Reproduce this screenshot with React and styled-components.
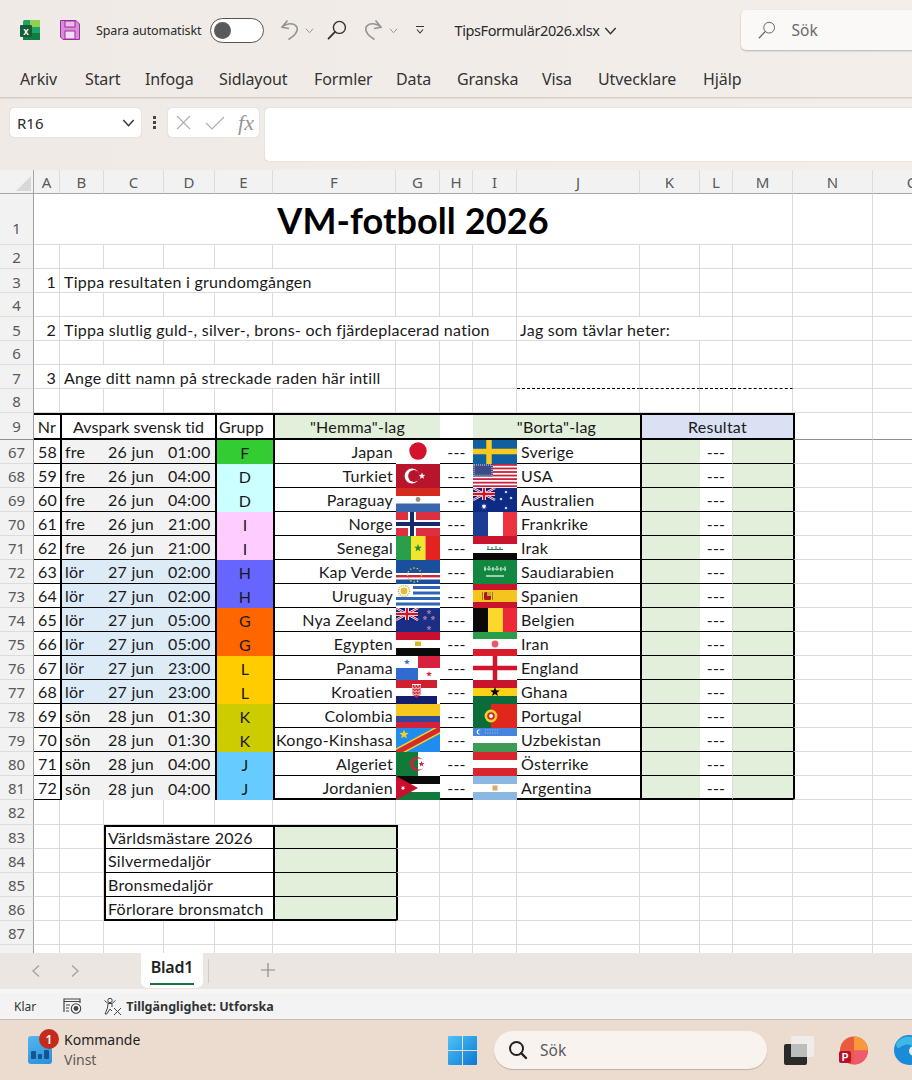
import React from "react";
import styled, { createGlobalStyle } from "styled-components";

const GRID = "#dbdbdb";
const GREEN = "#e2efda";
const UI = '"Noto Sans", "Open Sans", sans-serif';
const SHEET = 'Lato, "Open Sans", sans-serif';
const COLS = "34px 26px 44px 60px 51px 58px 123px 44px 33px 44px 123px 60px 33px 60px 80px 80px";

const Global = createGlobalStyle`
	html, body { margin: 0; padding: 0; overflow: hidden; background: #f0ebe6; }
`;
const Page = styled.div`
	width: 912px;
	height: 1080px;
	display: flex;
	flex-direction: column;
	overflow: hidden;
	font-family: ${UI};
	color: #2b2b2b;
`;
const Top = styled.div`
	background: linear-gradient(90deg, #efeae5, #f3eeea);
	flex-shrink: 0;
`;
const TitleBar = styled.div`
	height: 60px;
	display: flex;
	align-items: center;
	padding-left: 20px;
	white-space: nowrap;
`;
const Slot = styled.div`
	margin-left: ${p => p.$ml || 0}px;
	display: flex;
	align-items: center;
	flex-shrink: 0;
`;
const AutoSave = styled.span`
	font-size: 12.5px;
	letter-spacing: -0.1px;
`;
const Toggle = styled.div`
	width: 54px;
	height: 25px;
	box-sizing: border-box;
	border: 1.5px solid #555;
	border-radius: 13px;
	background: #fff;
	display: flex;
	align-items: center;
	padding-left: 3px;
	&::before {
		content: '';
		width: 17px;
		height: 17px;
		border-radius: 50%;
		background: #5a5a5a;
	}
`;
const FileName = styled.span`
	font-size: 14.5px;
	letter-spacing: -0.4px;
`;
const SearchBox = styled.div`
	width: 220px;
	height: 40px;
	box-sizing: border-box;
	background: #fbf9f8;
	border-radius: 5px;
	box-shadow: 0 1px 2px rgba(0, 0, 0, 0.25);
	display: flex;
	align-items: center;
	padding-left: 17px;
	gap: 16px;
	font-size: 15.5px;
	color: #6a6a6a;
`;
const TabBar = styled.div`
	height: 38px;
	display: flex;
	align-items: center;
	padding: 0 0 0 20px;
	box-sizing: border-box;
	border-bottom: 1px solid #d2cdc8;
	box-shadow: 0 1px 1px rgba(0, 0, 0, 0.06);
`;
const RibbonTab = styled.div`
	width: ${p => p.$w}px;
	flex-shrink: 0;
	font-size: 16px;
	letter-spacing: -0.1px;
	color: #333;
`;
const FormulaBar = styled.div`
	height: 72px;
	box-sizing: border-box;
	padding: 10px 0 0 10px;
	display: flex;
	align-items: flex-start;
`;
const NameBox = styled.div`
	width: 131px;
	height: 29px;
	box-sizing: border-box;
	background: #fff;
	border-radius: 4px;
	box-shadow: 0 0 1px rgba(0, 0, 0, 0.3);
	display: flex;
	align-items: center;
	justify-content: space-between;
	padding: 0 6px 0 7px;
	font-size: 15px;
`;
const Dots = styled.div`
	width: 27px;
	height: 29px;
	display: flex;
	flex-direction: column;
	align-items: center;
	justify-content: center;
	gap: 2px;
	span {
		width: 3px;
		height: 3px;
		background: #444;
	}
`;
const FxBox = styled.div`
	width: 91px;
	height: 29px;
	box-sizing: border-box;
	background: #fff;
	border-radius: 4px;
	box-shadow: 0 0 1px rgba(0, 0, 0, 0.3);
	display: flex;
	align-items: center;
	justify-content: space-between;
	padding: 0 5px 0 7px;
	margin-right: 6px;
`;
const Fx = styled.span`
	font-family: "Liberation Serif", serif;
	font-style: italic;
	font-size: 22px;
	color: #969696;
`;
const FormulaInput = styled.div`
	flex: 1;
	height: 53px;
	background: #fff;
	border-radius: 4px 0 0 4px;
	box-shadow: 0 0 1px rgba(0, 0, 0, 0.35);
`;

const Sheet = styled.div`
	height: 783px;
	flex-shrink: 0;
	overflow: hidden;
	background: #fff;
`;
const Row = styled.div`
	display: grid;
	grid-template-columns: ${COLS};
	height: ${p => p.$h || 24}px;
	width: 1014px;
`;
const Head = styled.div`
	background: #f2f2f2;
	color: #595959;
	font-family: ${UI};
	font-size: 15px;
	display: flex;
	align-items: center;
	justify-content: center;
	box-sizing: border-box;
	border-right: 1px solid ${p => (p.$corner ? "#a6a6a6" : "#dcdcdc")};
	border-bottom: ${p => p.$bb || "1px solid #a6a6a6"};
`;
const RowHead = styled(Head)`
	border-right: 1px solid #a0a0a0;
	border-bottom: ${p => p.$bb || "1px solid #dcdcdc"};
	padding-top: ${p => p.$pt || 0}px;
`;
const Corner = styled(Head)`
	justify-content: flex-end;
	align-items: flex-end;
	padding: 0 2px 2px 0;
`;
const Cell = styled.div`
	grid-column: span ${p => p.$span || 1};
	box-sizing: border-box;
	display: flex;
	align-items: center;
	justify-content: ${p => p.$align || "flex-start"};
	min-width: 0;
	white-space: nowrap;
	padding: ${p => p.$pad || "0"};
	background: ${p => p.$bg || "#fff"};
	color: #1a1a1a;
	font-family: ${SHEET};
	font-size: 16px;
	letter-spacing: ${p => p.$ls || "0.26px"};
	border-right: ${p => p.$br || `1px solid ${GRID}`};
	border-bottom: ${p => p.$bb || `1px solid ${GRID}`};
	border-left: ${p => (p.$tl ? "2px solid #000" : "none")};
	border-top: ${p => (p.$tt ? "2px solid #000" : "none")};
`;
const Title = styled(Cell)`
	font-size: 36px;
	font-weight: 700;
	color: #000;
	letter-spacing: 0.1px;
`;
const FlagCell = styled.div`
	height: 24px;
	background: #fff;
	overflow: hidden;
`;
const FlagSvg = styled.svg`
	display: block;
	width: 44px;
	height: 24px;
`;

const SheetTabs = styled.div`
	height: 40px;
	flex-shrink: 0;
	background: #ebe6e1;
	display: flex;
	align-items: flex-start;
	box-sizing: border-box;
	border-bottom: 4px solid #f7f6f5;
`;
const Nav = styled.div`
	width: 141px;
	height: 36px;
	flex-shrink: 0;
	display: flex;
	align-items: center;
	gap: 29px;
	padding-left: 31px;
	box-sizing: border-box;
`;
const ActiveTab = styled.div`
	width: 62px;
	height: 35px;
	flex-shrink: 0;
	box-sizing: border-box;
	background: #fff;
	border-radius: 0 0 7px 7px;
	display: flex;
	justify-content: center;
	font-size: 16px;
	font-weight: 600;
	letter-spacing: -0.2px;
	color: #222;
	padding-top: 3px;
`;
const TabLabel = styled.span`
	height: 27px;
	padding: 0 0.5px;
	border-bottom: 2px solid #1e6e42;
`;
const TabSep = styled.div`
	width: 1px;
	height: 24px;
	margin: 6px 0 0 5px;
	background: #cfcac5;
`;
const Plus = styled.div`
	margin: 9px 0 0 51px;
	display: flex;
`;
const StatusBar = styled.div`
	height: 27px;
	flex-shrink: 0;
	background: #f3f3f3;
	display: flex;
	align-items: center;
	padding-left: 14px;
	font-size: 12px;
	color: #333;
	border-bottom: 1px solid #c9bcb2;
	box-sizing: border-box;
`;
const StatusBold = styled.span`
	font-weight: 700;
	font-size: 12.5px;
	margin-left: 4px;
	color: #333;
`;
const Taskbar = styled.div`
	height: 60px;
	flex-shrink: 0;
	background: #ecdccf;
	display: flex;
	align-items: center;
	white-space: nowrap;
`;
const Widget = styled.div`
	width: 24px;
	height: 28px;
	margin-left: 28px;
	position: relative;
	flex-shrink: 0;
	background: linear-gradient(160deg, #52b6f2, #2c8fdc);
	border-radius: 3px;
	display: flex;
	align-items: flex-end;
	gap: 2px;
	padding: 0 3px 5px;
	box-sizing: border-box;
`;
const Bar = styled.span`
	flex: 1;
	height: ${p => p.$h}px;
	background: #12568f;
	border-radius: 1px;
`;
const Badge = styled.div`
	position: absolute;
	top: -7px;
	right: -7px;
	width: 20px;
	height: 20px;
	border-radius: 50%;
	background: #c42b1c;
	color: #fff;
	font-size: 12px;
	font-weight: 600;
	display: flex;
	align-items: center;
	justify-content: center;
`;
const WidgetText = styled.div`
	margin-left: 12px;
	width: 384px;
	flex-shrink: 0;
	font-size: 14px;
	line-height: 20px;
	color: #1f1f1f;
	span {
		display: block;
		color: #5f5a56;
	}
`;
const TaskSearch = styled.div`
	width: 273px;
	height: 38px;
	margin-left: 17px;
	flex-shrink: 0;
	box-sizing: border-box;
	border-radius: 19px;
	background: #f9f3ef;
	box-shadow: 0 1px 1px rgba(0, 0, 0, 0.2);
	display: flex;
	align-items: center;
	gap: 12px;
	padding-left: 14px;
	font-size: 15.5px;
	color: #5a5a5a;
`;

const star = (cx, cy, r, n = 5) => {
	const pts = [];
	for (let i = 0; i < n * 2; i++) {
		const rr = i % 2 ? r * 0.42 : r;
		const a = -Math.PI / 2 + (i * Math.PI) / n;
		pts.push(`${(cx + rr * Math.cos(a)).toFixed(2)},${(cy + rr * Math.sin(a)).toFixed(2)}`);
	}
	return pts.join(" ");
};

const Jack = () => (
	<g>
		<rect width="22" height="12" fill="#00247d" />
		<path d="M0 0L22 12M22 0L0 12" stroke="#fff" strokeWidth="2.4" />
		<path d="M0 0L22 12M22 0L0 12" stroke="#cf142b" strokeWidth="0.9" />
		<path d="M11 0V12M0 6H22" stroke="#fff" strokeWidth="4" />
		<path d="M11 0V12M0 6H22" stroke="#cf142b" strokeWidth="2.4" />
	</g>
);
const Bars = ({ a, b, c, y1 = 8, y2 = 16 }) => (
	<g>
		<rect width="44" height={y1} fill={a} />
		<rect y={y1} width="44" height={y2 - y1} fill={b} />
		<rect y={y2} width="44" height={24 - y2} fill={c} />
	</g>
);
const Flag = ({ children }) => (
	<FlagCell>
		<FlagSvg viewBox="0 0 44 24">{children}</FlagSvg>
	</FlagCell>
);

const flags = {
	Japan: <circle cx="22" cy="11" r="8.7" fill="#d3122c" />,
	Turkiet: (
		<g>
			<rect width="44" height="24" fill="#b8152c" />
			<circle cx="16" cy="12" r="7.4" fill="#fff" />
			<circle cx="18" cy="12" r="5.9" fill="#b8152c" />
			<polygon points={star(26, 12, 3.4)} fill="#fff" />
		</g>
	),
	Paraguay: (
		<g>
			<Bars a="#d52b1e" b="#fff" c="#3a66ad" y1={8} y2={15.5} />
			<circle cx="22" cy="11.5" r="2.4" fill="#a08a78" />
		</g>
	),
	Norge: (
		<g>
			<rect width="44" height="24" fill="#dc3040" />
			<path d="M16 0V24M0 12H44" stroke="#fff" strokeWidth="8" />
			<path d="M16 0V24M0 12H44" stroke="#15296b" strokeWidth="4" />
		</g>
	),
	Senegal: (
		<g>
			<rect width="15" height="24" fill="#2b9e4c" />
			<rect x="15" width="14.5" height="24" fill="#f2e52d" />
			<rect x="29.5" width="14.5" height="24" fill="#e3231f" />
			<polygon points={star(22, 12, 4)} fill="#1d8a3c" />
		</g>
	),
	"Kap Verde": (
		<g>
			<rect width="44" height="24" fill="#1a4f9e" />
			<rect y="13" width="44" height="6.5" fill="#fff" />
			<rect y="15" width="44" height="2.4" fill="#d2233a" />
			<circle cx="18.5" cy="15" r="7" fill="none" stroke="#e6c53a" strokeWidth="1.3" strokeDasharray="1.5 2" />
		</g>
	),
	Uruguay: (
		<g>
			<rect width="44" height="24" fill="#fff" />
			<path d="M17 3.5H44M17 9H44M0 14.5H44M0 20H44" stroke="#2f63b8" strokeWidth="2.8" />
			<circle cx="8" cy="7" r="3.4" fill="#e8b93a" />
			<circle cx="8" cy="7" r="5.5" fill="none" stroke="#d6a72a" strokeWidth="1.4" strokeDasharray="1 1" />
		</g>
	),
	"Nya Zeeland": (
		<g>
			<rect width="44" height="24" fill="#1b2e86" />
			<Jack />
			{[[33, 4], [37, 10], [29, 10], [33, 20]].map(([x, y]) => (
				<polygon key={x + "-" + y} points={star(x, y, 2)} fill="#c2374f" stroke="#fff" strokeWidth="0.3" />
			))}
		</g>
	),
	Egypten: (
		<g>
			<Bars a="#c8102e" b="#fff" c="#0a0a0a" />
			<rect x="19" y="9.5" width="6" height="4.5" fill="#e6b422" />
		</g>
	),
	Panama: (
		<g>
			<rect width="44" height="24" fill="#fff" />
			<rect x="22" width="22" height="12" fill="#d8213f" />
			<rect y="12" width="22" height="12" fill="#2f6bd0" />
			<polygon points={star(11, 6, 3)} fill="#2f6bd0" />
			<polygon points={star(33, 18, 3)} fill="#d8213f" />
		</g>
	),
	Kroatien: (
		<g>
			<rect width="41" height="8" fill="#cf2030" />
			<rect y="8" width="41" height="8" fill="#fff" />
			<rect y="16" width="41" height="8" fill="#131e6e" />
			<rect x="16" y="4" width="9" height="12" fill="#fff" />
			<path d="M16.5 5H24.5V14.5L20.5 18L16.5 14.5Z" fill="#d5233a" />
			<path d="M19 5V16M22 5V16M16.5 8H24.5M16.5 11H24.5M16.5 14H24.5" stroke="#fff" strokeWidth="1" strokeDasharray="1.5 1.5" />
		</g>
	),
	Colombia: <Bars a="#f6c81d" b="#2d4a9c" c="#d3233c" y1={12} y2={18} />,
	"Kongo-Kinshasa": (
		<g>
			<rect width="44" height="24" fill="#1f8cf0" />
			<path d="M-2 26L46 0" stroke="#f5d01e" strokeWidth="8" />
			<path d="M-2 26L46 0" stroke="#d32a2f" strokeWidth="5" />
			<polygon points={star(8, 6.5, 5)} fill="#f5d01e" />
		</g>
	),
	Algeriet: (
		<g>
			<rect width="44" height="24" fill="#fff" />
			<rect width="22" height="24" fill="#0f7a3a" />
			<circle cx="21" cy="12" r="7" fill="#d2203a" />
			<path d="M22 6.49A5.6 5.6 0 1 1 22 17.51Z" fill="#fff" />
			<path d="M22 6.49A5.6 5.6 0 0 0 22 17.51Z" fill="#0f7a3a" />
			<polygon points={star(25.5, 12, 3)} fill="#d2203a" />
		</g>
	),
	Jordanien: (
		<g>
			<Bars a="#0a0a0a" b="#fff" c="#11793c" />
			<polygon points="0,0 22,12 0,24" fill="#c8102e" />
			<polygon points={star(7, 12, 2.4, 7)} fill="#fff" />
		</g>
	),
	Sverige: (
		<g>
			<rect width="44" height="24" fill="#10609f" />
			<path d="M16 0V24M0 11.5H44" stroke="#fcc91c" strokeWidth="5.5" />
		</g>
	),
	USA: (
		<g>
			<rect width="44" height="24" fill="#fff" />
			{[0, 1, 2, 3, 4, 5, 6].map(i => (
				<rect key={i} y={i * 3.55} width="44" height="1.8" fill="#c9223f" />
			))}
			<rect width="20" height="12.4" fill="#3c4a86" />
			<rect x="1" y="1" width="18" height="10.4" fill="none" stroke="#8f98bb" strokeWidth="2" strokeDasharray="1 1" />
		</g>
	),
	Australien: (
		<g>
			<rect width="44" height="24" fill="#0d2a84" />
			<Jack />
			<polygon points={star(11, 18.5, 3.2, 7)} fill="#fff" />
			{[[33, 4], [38, 10], [28, 11], [33, 20]].map(([x, y]) => (
				<polygon key={x + "-" + y} points={star(x, y, 1.7, 7)} fill="#fff" />
			))}
		</g>
	),
	Frankrike: (
		<g>
			<rect width="15" height="24" fill="#1c3b94" />
			<rect x="15" width="15" height="24" fill="#fff" />
			<rect x="30" width="14" height="24" fill="#ee3340" />
		</g>
	),
	Irak: (
		<g>
			<Bars a="#c8142c" b="#fff" c="#0a0a0a" y1={8} y2={17} />
			<path d="M14 13.5H30M15 13V10M19 13V11M23 13V10M27 13V11" stroke="#1f7a3c" strokeWidth="1" />
		</g>
	),
	Saudiarabien: (
		<g>
			<rect width="44" height="24" fill="#11873f" />
			<path d="M11 9H33M12 6.5V11M16 6V11M20 7V11M24 6V11M28 7V11M32 6.5V11" stroke="#e9f5ec" strokeWidth="1.1" strokeDasharray="2 0.6" />
			<path d="M13 16H31" stroke="#fff" strokeWidth="1.2" />
		</g>
	),
	Spanien: (
		<g>
			<Bars a="#c8142c" b="#f6c51d" c="#c8142c" y1={6} y2={18} />
			<rect x="11" y="8" width="7" height="8" rx="1.5" fill="#ad1519" />
			<rect x="14" y="8" width="4" height="4" fill="#caa52d" />
			<path d="M9.5 8V16M19.5 8V16" stroke="#8a7a50" strokeWidth="1" />
		</g>
	),
	Belgien: (
		<g>
			<rect width="15" height="24" fill="#0a0a0a" />
			<rect x="15" width="15" height="24" fill="#fdd72a" />
			<rect x="30" width="14" height="24" fill="#ed2939" />
		</g>
	),
	Iran: (
		<g>
			<Bars a="#2a9d4a" b="#fff" c="#da1b2c" y1={7} y2={17} />
			<circle cx="22" cy="12" r="3.4" fill="#e5596a" />
		</g>
	),
	England: (
		<g>
			<rect width="44" height="24" fill="#fff" />
			<path d="M22 0V24M0 12H44" stroke="#cf142b" strokeWidth="4.5" />
		</g>
	),
	Ghana: (
		<g>
			<Bars a="#c8142c" b="#fcd116" c="#0c6b3d" />
			<polygon points={star(22, 12, 5)} fill="#000" />
		</g>
	),
	Portugal: (
		<g>
			<rect width="44" height="24" fill="#e0271e" />
			<rect width="18" height="24" fill="#0b6e3a" />
			<circle cx="18" cy="12" r="6.4" fill="#f2d030" />
			<circle cx="18" cy="12" r="3.8" fill="#d1281f" />
			<circle cx="18" cy="12" r="1.9" fill="#fff" />
		</g>
	),
	Uzbekistan: (
		<g>
			<Bars a="#4585e0" b="#fff" c="#3e9a55" y1={8} y2={15} />
			<circle cx="6" cy="4" r="2.4" fill="#fff" />
			<circle cx="7" cy="4" r="2" fill="#4585e0" />
			<path d="M12 2H26M12 5H26" stroke="#a8c7f0" strokeWidth="1" strokeDasharray="1 1.4" />
		</g>
	),
	"Österrike": <Bars a="#d9252e" b="#fff" c="#d9252e" />,
	Argentina: (
		<g>
			<Bars a="#8ab8e2" b="#fff" c="#8ab8e2" />
			<rect x="19.5" y="9.5" width="5" height="5" fill="#e0a860" />
		</g>
	),
};

const matches = [
	[67, 58, "fre", "26 jun", "01:00", "F", "Japan", "Sverige"],
	[68, 59, "fre", "26 jun", "04:00", "D", "Turkiet", "USA"],
	[69, 60, "fre", "26 jun", "04:00", "D", "Paraguay", "Australien"],
	[70, 61, "fre", "26 jun", "21:00", "I", "Norge", "Frankrike"],
	[71, 62, "fre", "26 jun", "21:00", "I", "Senegal", "Irak"],
	[72, 63, "lör", "27 jun", "02:00", "H", "Kap Verde", "Saudiarabien"],
	[73, 64, "lör", "27 jun", "02:00", "H", "Uruguay", "Spanien"],
	[74, 65, "lör", "27 jun", "05:00", "G", "Nya Zeeland", "Belgien"],
	[75, 66, "lör", "27 jun", "05:00", "G", "Egypten", "Iran"],
	[76, 67, "lör", "27 jun", "23:00", "L", "Panama", "England"],
	[77, 68, "lör", "27 jun", "23:00", "L", "Kroatien", "Ghana"],
	[78, 69, "sön", "28 jun", "01:30", "K", "Colombia", "Portugal"],
	[79, 70, "sön", "28 jun", "01:30", "K", "Kongo-Kinshasa", "Uzbekistan"],
	[80, 71, "sön", "28 jun", "04:00", "J", "Algeriet", "Österrike"],
	[81, 72, "sön", "28 jun", "04:00", "J", "Jordanien", "Argentina"],
];
const groupColors = {
	F: "#33cc33", D: "#ccffff", I: "#ffccff", H: "#6666ff",
	G: "#ff6600", L: "#ffcc00", K: "#cccc00", J: "#66ccff",
};
const columnLetters = "ABCDEFGHIJKLMNOP".split("");
const medals = ["Världsmästare 2026", "Silvermedaljör", "Bronsmedaljör", "Förlorare bronsmatch"];

const Blank = ({ n }) => Array.from({ length: n }, (_, i) => <Cell key={"b" + i} />);

const MatchRow = ({ m }) => {
	const [row, nr, day, date, time, group, home, away] = m;
	const line = "1px solid #000";
	const last = row === 81;
	const thick = "2px solid #000";
	const fill = day === "lör" ? "#ddebf7" : "#f2f2f2";
	const bottom = last ? thick : line;
	const dateBottom = last ? "none" : line;
	return (
		<Row>
			<RowHead>{row}</RowHead>
			<Cell $align="flex-end" $pad="0 3px 0 0" $bb={line} $br="none">{nr}</Cell>
			<Cell $tl $bg={fill} $br="none" $bb={dateBottom} $pad="0 0 0 3px">{day}</Cell>
			<Cell $bg={fill} $br="none" $bb={dateBottom} $pad="0 0 0 4px">{date}</Cell>
			<Cell $bg={fill} $br="none" $bb={dateBottom} $pad="0 0 0 4px">{time}</Cell>
			<Cell $tl $bg={groupColors[group]} $br="none" $bb="none" $align="center">{group}</Cell>
			<Cell $tl $align="flex-end" $pad="0 3px 0 0" $br="none" $bb={bottom}>{home}</Cell>
			<Flag>{flags[home]}</Flag>
			<Cell $align="center" $bb={bottom} $br="none">---</Cell>
			<Flag>{flags[away]}</Flag>
			<Cell $pad="0 0 0 4px" $br="none" $bb={bottom}>{away}</Cell>
			<Cell $tl $bg={GREEN} $br="none" $bb={bottom} />
			<Cell $align="center" $br={`1px solid ${GRID}`} $bb={bottom}>---</Cell>
			<Cell $bg={GREEN} $br="none" $bb={bottom} />
			<Cell $tl />
			<Cell />
		</Row>
	);
};

const Chevron = ({ size = 10, color = "#555" }) => (
	<svg width={size} height={size} viewBox="0 0 10 10">
		<path d="M1 3L5 7.5L9 3" fill="none" stroke={color} strokeWidth="1.1" />
	</svg>
);
const Lens = ({ size = 20, color = "#333", width = 1.4 }) => (
	<svg width={size} height={size} viewBox="0 0 20 20">
		<circle cx="12.4" cy="7.4" r="6" fill="none" stroke={color} strokeWidth={width} />
		<path d="M8 11.8L1.5 18.6" stroke={color} strokeWidth={width + 0.4} strokeLinecap="round" />
	</svg>
);
const Undo = ({ flip }) => (
	<svg width="20" height="22" viewBox="0 0 20 22" style={flip ? { transform: "scaleX(-1)" } : undefined}>
		<path
			d="M7.5 1.5L1.8 8.2L9 9.5M2.2 8C6 4.2 13.5 3.2 16.5 7.5C19 12 14 17 8.5 20.5"
			fill="none"
			stroke="#949494"
			strokeWidth="1.6"
			strokeLinejoin="round"
		/>
	</svg>
);

export default function App() {
	return (
		<Page>
			<Global />
			<Top>
				<TitleBar>
					<Slot>
						<svg width="20" height="20" viewBox="0 0 20 20">
							<rect x="3" width="17" height="20" rx="1.5" fill="#21a366" />
							<rect x="10" width="10" height="7" fill="#8fd14f" />
							<rect x="3" y="13" width="17" height="7" fill="#107c41" />
							<rect y="5" width="12" height="12" rx="1" fill="#185c37" />
							<text x="6" y="14.5" fontSize="10" fontWeight="700" fill="#fff" textAnchor="middle" fontFamily="Liberation Sans">x</text>
						</svg>
					</Slot>
					<Slot $ml={20}>
						<svg width="20" height="20" viewBox="0 0 20 20">
							<path d="M0.5 0.5H16L19.5 4V19.5H3L0.5 17Z" fill="#d98cd9" stroke="#9b2f9b" />
							<rect x="5" y="1" width="10" height="6" fill="#e9bce9" stroke="#9b2f9b" />
							<rect x="5" y="11" width="10" height="8" fill="#f4dcf4" stroke="#9b2f9b" />
						</svg>
					</Slot>
					<Slot $ml={16}><AutoSave>Spara automatiskt</AutoSave></Slot>
					<Slot $ml={9}><Toggle /></Slot>
					<Slot $ml={16}><Undo /></Slot>
					<Slot $ml={5}><Chevron size={9} color="#999" /></Slot>
					<Slot $ml={13}><Lens /></Slot>
					<Slot $ml={16}><Undo flip /></Slot>
					<Slot $ml={6}><Chevron size={9} color="#999" /></Slot>
					<Slot $ml={17}>
						<svg width="10" height="10" viewBox="0 0 10 10">
							<path d="M1 1.5H9M2 4.5L5 8L8 4.5" fill="none" stroke="#333" strokeWidth="1.1" />
						</svg>
					</Slot>
					<Slot $ml={29}><FileName>TipsFormulär2026.xlsx</FileName></Slot>
					<Slot $ml={4}><Chevron size={13} color="#333" /></Slot>
					<Slot $ml={124}>
						<SearchBox>
							<Lens size={18} color="#666" width={1.1} />
							Sök
						</SearchBox>
					</Slot>
				</TitleBar>
				<TabBar>
					{[["Arkiv", 65], ["Start", 60], ["Infoga", 74], ["Sidlayout", 95], ["Formler", 82], ["Data", 61], ["Granska", 85], ["Visa", 56], ["Utvecklare", 105], ["Hjälp", 60]].map(([t, w]) => (
						<RibbonTab key={t} $w={w}>{t}</RibbonTab>
					))}
				</TabBar>
				<FormulaBar>
					<NameBox>
						R16
						<Chevron size={13} color="#333" />
					</NameBox>
					<Dots><span /><span /><span /></Dots>
					<FxBox>
						<svg width="17" height="17" viewBox="0 0 17 17">
							<path d="M2 2L15 15M15 2L2 15" stroke="#b0b0b0" strokeWidth="1.2" />
						</svg>
						<svg width="20" height="16" viewBox="0 0 20 16">
							<path d="M1 8L7 14L19 2" fill="none" stroke="#b0b0b0" strokeWidth="1.2" />
						</svg>
						<Fx>fx</Fx>
					</FxBox>
					<FormulaInput />
				</FormulaBar>
			</Top>
			<Sheet>
				<Row>
					<Corner $corner>
						<svg width="15" height="15" viewBox="0 0 15 15">
							<path d="M15 0V15H0Z" fill="#d8d8d8" />
						</svg>
					</Corner>
					{columnLetters.slice(0, 15).map(c => <Head key={c}>{c}</Head>)}
				</Row>
				<Row $h={51}>
					<RowHead $pt={17}>1</RowHead>
					<Title $span={13} $align="center" $pad="2px 0 0">VM-fotboll 2026</Title>
					<Cell />
					<Cell />
				</Row>
				<Row><RowHead>2</RowHead><Blank n={15} /></Row>
				<Row>
					<RowHead $pt={2}>3</RowHead>
					<Cell $align="flex-end" $pad="2px 3px 0 0">1</Cell>
					<Cell $span={5} $pad="2px 0 0 4px">Tippa resultaten i grundomgången</Cell>
					<Blank n={9} />
				</Row>
				<Row><RowHead>4</RowHead><Blank n={15} /></Row>
				<Row>
					<RowHead $pt={2}>5</RowHead>
					<Cell $align="flex-end" $pad="2px 3px 0 0">2</Cell>
					<Cell $span={8} $pad="2px 0 0 4px">Tippa slutlig guld-, silver-, brons- och fjärdeplacerad nation</Cell>
					<Cell $span={2} $pad="2px 0 0 3px" $br="none">Jag som tävlar heter:</Cell>
					<Blank n={4} />
				</Row>
				<Row><RowHead>6</RowHead><Blank n={15} /></Row>
				<Row>
					<RowHead $pt={2}>7</RowHead>
					<Cell $align="flex-end" $pad="2px 3px 0 0">3</Cell>
					<Cell $span={5} $pad="2px 0 0 4px">Ange ditt namn på streckade raden här intill</Cell>
					<Blank n={3} />
					<Cell $bb="1px dashed #000" />
					<Cell $bb="1px dashed #000" />
					<Cell $bb="1px dashed #000" />
					<Cell $bb="1px dashed #000" />
					<Cell />
					<Cell />
				</Row>
				<Row><RowHead>8</RowHead><Blank n={15} /></Row>
				<Row $h={27}>
					<RowHead $bb="1px solid #8f8f8f">9</RowHead>
					<Cell $tt $align="center" $bb="2px solid #000" $br="none">Nr</Cell>
					<Cell $tt $tl $span={3} $align="center" $bb="2px solid #000" $br="none" $ls="0.04px">Avspark svensk tid</Cell>
					<Cell $tt $tl $pad="0 0 0 2px" $bb="2px solid #000" $br="none" $ls="0.1px">Grupp</Cell>
					<Cell $tt $tl $span={2} $bg={GREEN} $align="center" $bb="2px solid #000" $br="none">"Hemma"-lag</Cell>
					<Cell $tt $bb="2px solid #000" $br="none" />
					<Cell $tt $span={2} $bg={GREEN} $align="center" $bb="2px solid #000" $br="none">"Borta"-lag</Cell>
					<Cell $tt $tl $span={3} $bg="#d9e1f2" $align="center" $bb="2px solid #000" $br="none">Resultat</Cell>
					<Cell $tl $bb="1px solid #8f8f8f" />
					<Cell $bb="1px solid #8f8f8f" />
				</Row>
				{matches.map(m => <MatchRow key={m[0]} m={m} />)}
				<Row $h={25}><RowHead>82</RowHead><Blank n={15} /></Row>
				{medals.map((label, i) => (
					<Row key={label}>
						<RowHead>{83 + i}</RowHead>
						<Blank n={2} />
						<Cell
							$tl
							$tt={i === 0}
							$span={3}
							$pad="0 0 0 2px"
							$br="none"
							$bb={i === 3 ? "2px solid #000" : "1px solid #000"}
						>
							{label}
						</Cell>
						<Cell
							$tl
							$tt={i === 0}
							$bg={GREEN}
							$br="none"
							$bb={i === 3 ? "2px solid #000" : "1px solid #000"}
						/>
						<Cell $tl />
						<Blank n={8} />
					</Row>
				))}
				<Row><RowHead>87</RowHead><Blank n={15} /></Row>
				<Row><RowHead /><Blank n={15} /></Row>
			</Sheet>
			<SheetTabs>
				<Nav>
					<svg width="10" height="14" viewBox="0 0 10 14">
						<path d="M8 1.5L2 7L8 12.5" fill="none" stroke="#a5a09c" strokeWidth="1.3" />
					</svg>
					<svg width="10" height="14" viewBox="0 0 10 14">
						<path d="M2 1.5L8 7L2 12.5" fill="none" stroke="#a5a09c" strokeWidth="1.3" />
					</svg>
				</Nav>
				<ActiveTab><TabLabel>Blad1</TabLabel></ActiveTab>
				<TabSep />
				<Plus>
					<svg width="16" height="16" viewBox="0 0 16 16">
						<path d="M8 1V15M1 8H15" stroke="#8f8a86" strokeWidth="1.2" />
					</svg>
				</Plus>
			</SheetTabs>
			<StatusBar>
				Klar
				<Slot $ml={27}>
					<svg width="19" height="18" viewBox="0 0 19 18">
						<path d="M1 15V2H17V6" fill="none" stroke="#444" strokeWidth="1.2" />
						<path d="M1 4.5H17M3 8H7M3 11H6M3 14H6" stroke="#444" strokeWidth="1.1" />
						<circle cx="13" cy="11.5" r="4.7" fill="none" stroke="#444" strokeWidth="1.1" />
						<circle cx="13" cy="11.5" r="2.4" fill="#444" />
					</svg>
				</Slot>
				<Slot $ml={21}>
					<svg width="19" height="19" viewBox="0 0 19 19">
						<circle cx="7" cy="3.5" r="2.2" fill="none" stroke="#444" strokeWidth="1" />
						<path d="M1.5 3.5L5 6.5H9L12.5 3.5M5 7L4.5 11L2 17H3.8L7 12L9 14M9 7V10" fill="none" stroke="#444" strokeWidth="1" />
						<path d="M11 11L18 18M18 11L11 18" stroke="#444" strokeWidth="1" />
					</svg>
				</Slot>
				<StatusBold>Tillgänglighet: Utforska</StatusBold>
			</StatusBar>
			<Taskbar>
				<Widget>
					<Bar $h={8} />
					<Bar $h={5} />
					<Bar $h={9} />
					<Badge>1</Badge>
				</Widget>
				<WidgetText>
					Kommande
					<span>Vinst</span>
				</WidgetText>
				<Slot>
					<svg width="29" height="29" viewBox="0 0 29 29">
						<defs>
							<linearGradient id="win" x1="0" y1="0" x2="1" y2="1">
								<stop offset="0" stopColor="#4fc3f7" />
								<stop offset="1" stopColor="#0b78d4" />
							</linearGradient>
						</defs>
						<path d="M0 1A1 1 0 0 1 1 0H14V14H0ZM15 0H28A1 1 0 0 1 29 1V14H15ZM0 15H14V29H1A1 1 0 0 1 0 28ZM15 15H29V28A1 1 0 0 1 28 29H15Z" fill="url(#win)" />
					</svg>
				</Slot>
				<TaskSearch>
					<svg width="20" height="20" viewBox="0 0 20 20">
						<circle cx="8.5" cy="8.5" r="6.5" fill="none" stroke="#222" strokeWidth="2" />
						<path d="M13.2 13.2L18 18" stroke="#222" strokeWidth="2.4" strokeLinecap="round" />
					</svg>
					Sök
				</TaskSearch>
				<Slot $ml={17}>
					<svg width="30" height="29" viewBox="0 0 30 29">
						<rect x="7" width="23" height="21" rx="2" fill="#f0ece9" />
						<rect y="8" width="23" height="21" rx="2" fill="#2a2a2a" />
						<rect x="7" y="8" width="16" height="13" fill="#bdbdbd" />
					</svg>
				</Slot>
				<Slot $ml={25}>
					<svg width="29" height="29" viewBox="0 0 29 29">
						<circle cx="15" cy="14.5" r="14" fill="#ea5a3c" />
						<path d="M15 .5A14 14 0 0 1 29 14.5H15Z" fill="#f79a3c" />
						<path d="M15 14.5H29A14 14 0 0 1 15 28.5Z" fill="#ef5a6f" />
						<rect y="15" width="12" height="12" rx="2" fill="#b7102c" />
						<text x="6" y="24.5" fontSize="10" fontWeight="700" fill="#fff" textAnchor="middle" fontFamily="Liberation Sans">P</text>
					</svg>
				</Slot>
				<Slot $ml={26}>
					<svg width="30" height="30" viewBox="0 0 30 30">
						<circle cx="15" cy="15" r="15" fill="#1b8bd8" />
						<path d="M2 9C8 -2 26 0 29 13C29 17 24 19 19 17C22 11 14 7 8 11C5 13 3 15 2 9Z" fill="#3fb8e8" />
						<circle cx="20" cy="16" r="5" fill="#e9eef2" />
					</svg>
				</Slot>
			</Taskbar>
		</Page>
	);
}
